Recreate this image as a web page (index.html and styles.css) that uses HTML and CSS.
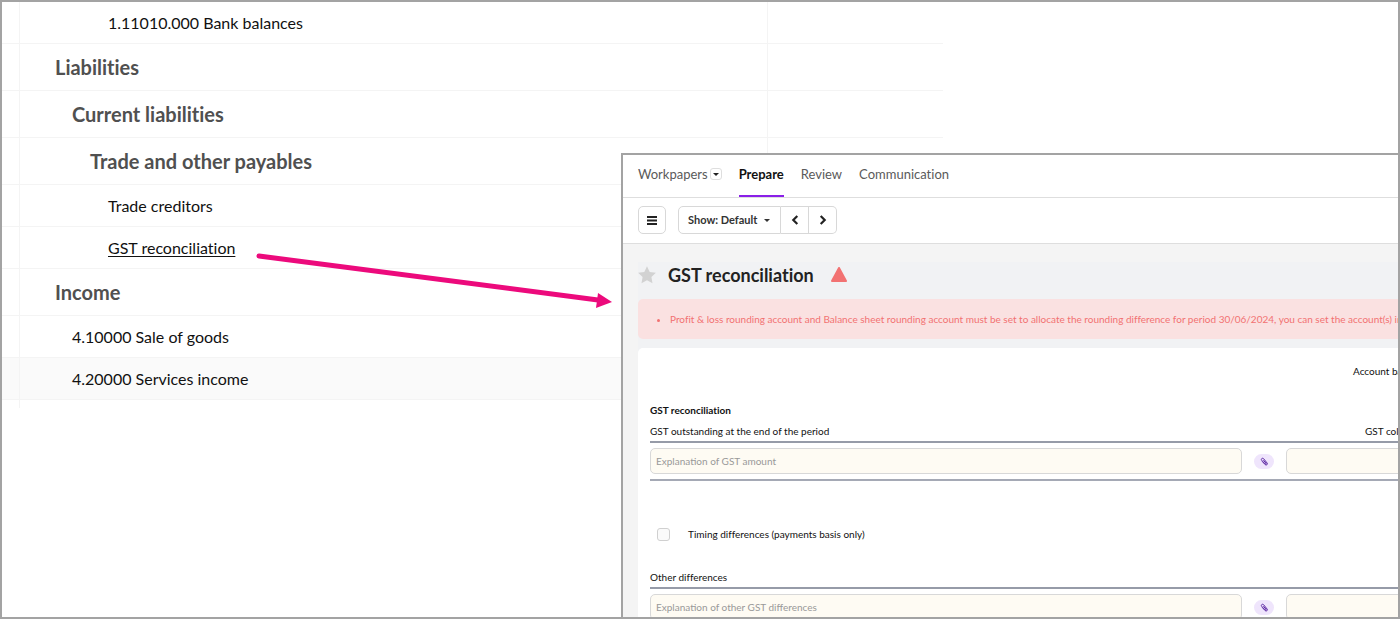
FILE: index.html
```html
<!DOCTYPE html>
<html lang="en">

<head>
    <meta charset="UTF-8">
    <meta name="viewport" content="width=device-width, initial-scale=1.0">
    <title>GST reconciliation</title>
    <link rel="stylesheet" href="styles.css">
</head>

<body>
    <div class="frame">
        <table class="accounts">
            <colgroup>
                <col class="col-mark">
                <col class="col-name">
                <col class="col-value">
            </colgroup>
            <tbody>
                <tr><td></td><td class="level-4">1.11010.000 Bank balances</td><td></td></tr>
                <tr class="group"><td></td><th scope="row" class="level-1">Liabilities</th><td></td></tr>
                <tr class="group"><td></td><th scope="row" class="level-2">Current liabilities</th><td></td></tr>
                <tr class="group"><td></td><th scope="row" class="level-3">Trade and other payables</th><td></td></tr>
                <tr><td></td><td class="level-4">Trade creditors</td><td></td></tr>
                <tr><td></td><td class="level-4"><a href="#workpaper">GST reconciliation</a></td><td></td></tr>
                <tr class="group"><td></td><th scope="row" class="level-1">Income</th><td></td></tr>
                <tr><td></td><td class="level-2">4.10000 Sale of goods</td><td></td></tr>
                <tr class="shaded"><td></td><td class="level-2">4.20000 Services income</td><td></td></tr>
                <tr class="spacer"><td></td><td></td><td></td></tr>
            </tbody>
        </table>

        <div class="workpaper" id="workpaper">
            <nav class="tabs">
                <div class="tab-group">
                    <a href="#" class="tab">Workpapers</a>
                    <button type="button" class="tab-menu" aria-label="Workpapers menu">
                        <svg width="6" height="3" viewBox="0 0 6 3"><path d="M0 0h6L3 3z" fill="#222"/></svg>
                    </button>
                </div>
                <a href="#" class="tab active">Prepare</a>
                <a href="#" class="tab">Review</a>
                <a href="#" class="tab">Communication</a>
            </nav>

            <div class="toolbar">
                <button type="button" class="tool menu" aria-label="Menu">
                    <svg width="10" height="9" viewBox="0 0 10 9"><path d="M0 1h10M0 4.5h10M0 8h10" stroke="#222" stroke-width="1.8"/></svg>
                </button>
                <div class="tool-group">
                    <button type="button" class="tool show">Show: Default
                        <svg width="6" height="3" viewBox="0 0 6 3"><path d="M0 0h6L3 3z" fill="#333"/></svg>
                    </button>
                    <button type="button" class="tool step" aria-label="Previous">
                        <svg width="8" height="10" viewBox="0 0 8 10"><path d="M6.3 1L2.3 5l4 4" fill="none" stroke="#222" stroke-width="2.2"/></svg>
                    </button>
                    <button type="button" class="tool step" aria-label="Next">
                        <svg width="8" height="10" viewBox="0 0 8 10"><path d="M1.7 1l4 4-4 4" fill="none" stroke="#222" stroke-width="2.2"/></svg>
                    </button>
                </div>
            </div>

            <div class="content">
                <div class="page">
                    <div class="title">
                        <svg width="18" height="18" viewBox="0 0 18 18"><path d="M9 .3l2.7 5.6 6.2.8-4.5 4.3 1.1 6.2L9 14.3l-5.5 2.9L4.6 11 .1 6.7l6.2-.8z" fill="#d2d2d2"/></svg>
                        <h1>GST reconciliation</h1>
                        <svg width="16" height="15" viewBox="0 0 16 15"><path d="M8 1l7 13H1z" fill="#f27272" stroke="#f27272" stroke-width="2" stroke-linejoin="round"/></svg>
                    </div>

                    <ul class="alert">
                        <li>Profit &amp; loss rounding account and Balance sheet rounding account must be set to allocate the rounding difference for period 30/06/2024, you can set the account(s) in the</li>
                    </ul>

                    <form class="sheet">
                        <div class="balance">Account balance</div>
                        <h2>GST reconciliation</h2>
                        <div class="row head">
                            <label for="gstNote">GST outstanding at the end of the period</label>
                            <label for="gstAmount" class="amount-label">GST collected</label>
                        </div>
                        <div class="row fields">
                            <input type="text" id="gstNote" placeholder="Explanation of GST amount">
                            <button type="button" class="attach" aria-label="Attach file">
                                <svg width="9" height="9" viewBox="0 0 9 9"><path d="M2.2 4.4l2.9 3.2c1.2 1.2 3-.3 2-1.6L3.6 1.7C2.6.5.6 1.9 1.6 3.2l3.3 3.6c.7.6 1.5-.1.9-.8L3.4 3.2" fill="none" stroke="#5f2aa5" stroke-width="1"/></svg>
                            </button>
                            <input type="text" id="gstAmount">
                        </div>
                        <div class="check">
                            <input type="checkbox" id="timing">
                            <label for="timing">Timing differences (payments basis only)</label>
                        </div>
                        <div class="row head">
                            <label for="otherNote">Other differences</label>
                        </div>
                        <div class="row fields">
                            <input type="text" id="otherNote" placeholder="Explanation of other GST differences">
                            <button type="button" class="attach" aria-label="Attach file">
                                <svg width="9" height="9" viewBox="0 0 9 9"><path d="M2.2 4.4l2.9 3.2c1.2 1.2 3-.3 2-1.6L3.6 1.7C2.6.5.6 1.9 1.6 3.2l3.3 3.6c.7.6 1.5-.1.9-.8L3.4 3.2" fill="none" stroke="#5f2aa5" stroke-width="1"/></svg>
                            </button>
                            <input type="text" aria-label="Other differences amount">
                        </div>
                    </form>
                </div>
            </div>
        </div>

        <!-- Arrow from the account link to its workpaper -->
        <svg class="arrow" width="364" height="62" viewBox="0 0 364 62">
            <path d="M9 8L348 52" stroke="#ec0a7c" stroke-width="5" stroke-linecap="round"/>
            <path d="M348 45l14 9-16 6z" fill="#ec0a7c"/>
        </svg>
    </div>
</body>

</html>
```
FILE: styles.css
```css
* {
    box-sizing: border-box;
}

body {
    margin: 0;
    font-family: Lato, sans-serif;
    font-variant-ligatures: none;
    color: #111;
    background: #fff;
}

.frame {
    position: relative;
    height: 100vh;
    border: 2px solid #a3a3a3;
    overflow: hidden;
}

/* Accounts list */
.accounts {
    width: 941px;
    table-layout: fixed;
    border-spacing: 0;
    font-size: 16px;
    line-height: 20px;
}

.col-mark {
    width: 18px;
}

.col-value {
    width: 175px;
}

.accounts td,
.accounts th {
    height: 42px;
    padding: 0;
    border-right: 1px solid #f4f4f4;
    border-bottom: 1px solid #f4f4f4;
    text-align: left;
}

.accounts td:last-child {
    border-right: none;
}

.accounts .group td,
.accounts .group th {
    height: 47px;
}

.accounts th {
    font-size: 20px;
    line-height: 24px;
    color: #505050;
}

.accounts .level-1 {
    padding-left: 35px;
}

.accounts .level-2 {
    padding-left: 52px;
}

.accounts .level-3 {
    padding-left: 70px;
}

.accounts .level-4 {
    padding-left: 88px;
}

.accounts a {
    color: #111;
    text-underline-offset: 2px;
}

.accounts .shaded td {
    background: #fafafa;
}

.accounts .spacer td {
    height: 8px;
    border-bottom: none;
}

/* Workpaper window */
.workpaper {
    position: absolute;
    top: 151px;
    right: 0;
    bottom: 0;
    left: 619px;
    display: flex;
    flex-direction: column;
    border-top: 2px solid #a3a3a3;
    border-left: 2px solid #a3a3a3;
    background: #fff;
    overflow: hidden;
}

.tabs {
    display: flex;
    gap: 17px;
    height: 43px;
    flex: none;
    padding: 0 15px;
    border-bottom: 1px solid #dedede;
    font-size: 13px;
    line-height: 38px;
}

.tab-group {
    display: flex;
    align-items: center;
    height: 38px;
    gap: 2px;
}

.tab {
    color: #5a5a5a;
    text-decoration: none;
}

.tab.active {
    color: #111;
    font-weight: bold;
    border-bottom: 2px solid #8a1fe8;
}

.tab-menu {
    display: flex;
    align-items: center;
    justify-content: center;
    width: 12px;
    height: 12px;
    padding: 0;
    border: 1px solid #dedede;
    border-radius: 3px;
    background: #fff;
}

.toolbar {
    display: flex;
    align-items: center;
    gap: 12px;
    height: 46px;
    flex: none;
    padding: 0 15px 1px;
    border-bottom: 1px solid #dedede;
}

.tool {
    display: flex;
    align-items: center;
    justify-content: center;
    height: 28px;
    padding: 0;
    border: 1px solid #d8d8d8;
    background: #fff;
    color: #333;
    font-family: inherit;
    font-size: 11px;
    font-weight: bold;
    line-height: 16px;
}

.tool.menu {
    width: 28px;
    border-radius: 5px;
}

.tool-group {
    display: flex;
}

.tool.show {
    gap: 7px;
    padding: 0 10px 0 9px;
    border-radius: 5px 0 0 5px;
}

.tool.step {
    width: 28px;
    border-left: none;
}

.tool.step:last-child {
    border-radius: 0 5px 5px 0;
}

.content {
    flex: 1;
    padding: 18px 0 0 15px;
    background: #f4f4f4;
    overflow: hidden;
}

.page {
    min-width: 1252px;
    background: #f1f2f4;
    font-size: 10px;
    line-height: 14px;
}

.title {
    display: flex;
    align-items: center;
    gap: 12px;
    height: 37px;
    padding-bottom: 12px;
}

.title h1 {
    margin: 0;
    padding-right: 5px;
    font-size: 18px;
    line-height: 24px;
    color: #222;
}

.alert {
    margin: 0 0 9px;
    padding: 13px 32px;
    border-radius: 5px;
    background: #fae1e1;
    color: #f27272;
}

.sheet {
    padding: 16px 12px;
    border-radius: 5px;
    background: #fff;
}

.balance {
    padding-left: 703px;
}

.sheet h2 {
    margin: 25px 0 7px;
    font-size: 10px;
    line-height: 14px;
}

.row {
    display: grid;
    grid-template-columns: 1fr 20px 1fr;
    gap: 12px;
    align-items: center;
}

.row.head {
    padding-bottom: 3px;
    border-bottom: 2px solid #969ba8;
}

.amount-label {
    grid-column: 3;
    padding-left: 79px;
}

.row.fields {
    padding: 5px 0;
    border-bottom: 2px solid #a5a9b5;
}

.row input {
    width: 100%;
    height: 26px;
    padding: 0 5px;
    border: 1px solid #d8d8d8;
    border-radius: 5px;
    background: #fefbf3;
    font-family: inherit;
    font-size: 10px;
}

.row input::placeholder {
    color: #999;
}

.attach {
    display: flex;
    align-items: center;
    justify-content: center;
    height: 15px;
    padding: 0;
    border: none;
    border-radius: 8px;
    background: #efe5fc;
}

.check {
    display: flex;
    align-items: center;
    gap: 18px;
    padding: 46px 7px 29px;
}

.check input {
    appearance: none;
    width: 13px;
    height: 13px;
    margin: 0;
    border: 1px solid #d0d0d0;
    border-radius: 3px;
    background: #fafafa;
}

.arrow {
    position: absolute;
    top: 246px;
    left: 248px;
}
```
